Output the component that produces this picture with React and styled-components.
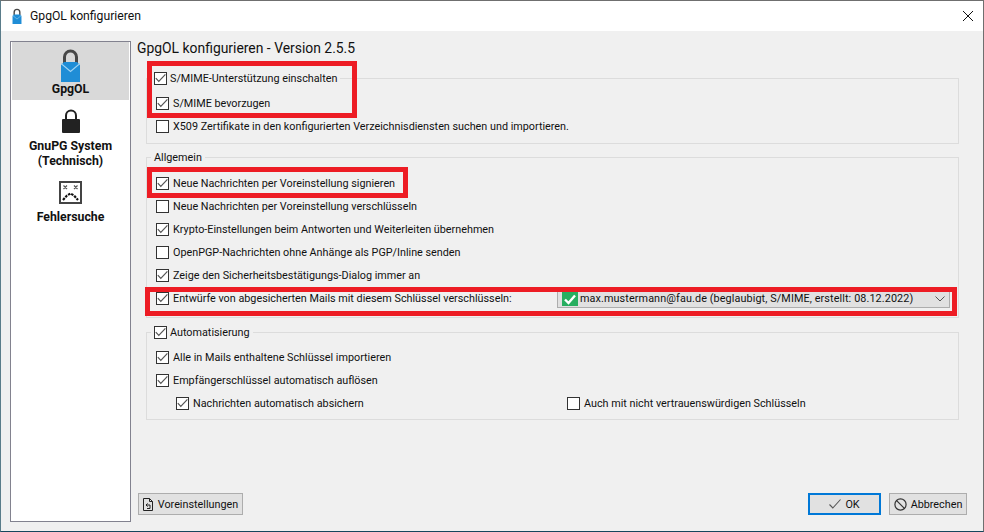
import React from 'react';
import styled, { createGlobalStyle } from 'styled-components';

const GlobalStyle = createGlobalStyle`
  html, body { margin: 0; padding: 0; background: #0c4a63; }
  * { box-sizing: border-box; }
  #root { width: 984px; height: 532px; }
  svg { flex: none; }
`;

const Window = styled.div`
  position: relative;
  width: 984px;
  height: 532px;
  display: flex;
  flex-direction: column;
  background: #f0f0f0;
  border: 1px solid #6f6f6f;
  border-left-color: #5a7c8a;
  border-bottom-color: #16465c;
  font-family: Roboto, "Liberation Sans", sans-serif;
  font-size: 10.8px;
  color: #111;
  white-space: nowrap;
  overflow: hidden;
`;

const TitleBar = styled.div`
  height: 30px;
  flex: none;
  display: flex;
  align-items: center;
  padding: 0 10px 0 11px;
  gap: 8px;
  background: #fff;
  font-size: 12.2px;
`;

const TitleText = styled.span`
  flex: 1;
`;

const Body = styled.div`
  flex: 1;
  display: flex;
  padding: 10px 9px 9px 9px;
  gap: 6px;
  min-height: 0;
`;

const Sidebar = styled.div`
  width: 121px;
  flex: none;
  background: #fff;
  border: 1px solid #82828f;
  padding: 0 1px;
  display: flex;
  flex-direction: column;
`;

const SideItem = styled.div`
  display: flex;
  flex-direction: column;
  align-items: center;
  text-align: center;
  height: ${p => p.$h}px;
  padding-top: ${p => p.$top}px;
  background: ${p => (p.$active ? '#d9d9d9' : 'transparent')};
  font-weight: 700;
  font-size: 12.3px;
  line-height: 15px;
`;

const SideLabel = styled.div`
  margin-top: ${p => p.$gap}px;
`;

const Main = styled.div`
  flex: 1;
  min-width: 0;
  display: flex;
  flex-direction: column;
`;

const Heading = styled.div`
  font-size: 13.9px;
  line-height: 15px;
  height: 30px;
  flex: none;
`;

const Group = styled.fieldset`
  margin: ${p => p.$mt}px 0 0 9px;
  width: 813px;
  height: ${p => p.$h}px;
  flex: none;
  border: 1px solid #dcdcdc;
  padding: 0;
  min-width: 0;
`;

const GroupTitle = styled.legend`
  margin-left: 4px;
  padding: 0 3px;
  height: 15px;
  display: flex;
  align-items: center;
  gap: 3px;
  line-height: 15px;
`;

const Rows = styled.div`
  display: flex;
  flex-direction: column;
  padding: ${p => p.$top}px 8px 0 9px;
`;

const Row = styled.div`
  height: 23px;
  display: flex;
  align-items: center;
  gap: 4px;
  padding-left: ${p => p.$indent || 0}px;
`;

const SubOption = styled.div`
  display: flex;
  align-items: center;
  gap: 4px;
  width: ${p => p.$w}px;
`;

const BoxFrame = styled.span`
  width: 13px;
  height: 13px;
  flex: none;
  border: 1px solid #333;
  background: #fff;
  display: inline-flex;
  align-items: center;
  justify-content: center;
`;

const Combo = styled.div`
  margin-left: 45px;
  width: 393px;
  height: 19px;
  flex: none;
  display: flex;
  align-items: center;
  gap: 2px;
  padding: 0 4px 0 4px;
  background: #e1e1e1;
  border: 1px solid #adadad;
`;

const ComboText = styled.span`
  flex: 1;
  letter-spacing: 0.11px;
`;

const Footer = styled.div`
  margin-top: auto;
  padding: 0 7px 7px 1px;
  display: flex;
  align-items: center;
  gap: 8px;
`;

const Button = styled.div`
  height: 22px;
  display: flex;
  align-items: center;
  justify-content: center;
  gap: ${p => p.$gap || 4}px;
  width: ${p => p.$w}px;
  background: #e1e1e1;
  border: ${p => (p.$def ? '2px solid #0078d7' : '1px solid #adadad')};
`;

const Spacer = styled.div`
  flex: 1;
`;

const Mark = styled.div`
  position: absolute;
  left: ${p => p.$x - 1}px;
  top: ${p => p.$y - 1}px;
  width: ${p => p.$w}px;
  height: ${p => p.$h}px;
  border: 5px solid #ed1c24;
  pointer-events: none;
`;

const Check = () => (
  <svg width="11" height="11" viewBox="0 0 11 11">
    <path d="M.8 5.2 L3.8 8.4 L10.4 1.4" fill="none" stroke="#555" strokeWidth="1.2" />
  </svg>
);

const CheckBox = ({ on }) => <BoxFrame>{on && <Check />}</BoxFrame>;

const CheckRow = ({ on, indent, children }) => (
  <Row $indent={indent}>
    <CheckBox on={on} />
    <span>{children}</span>
  </Row>
);

const MailLock = ({ w = 19, h = 34 }) => (
  <svg width={w} height={h} viewBox="0 0 19 34">
    <path d="M3.5 15 V9 a6 6 0 0 1 12 0 V15" fill="none" stroke="#484848" strokeWidth="3" />
    <path d="M0 17 L3 14 H16 L19 17 V34 H0 Z" fill="#1f8dd6" />
    <path d="M0 15.5 L9.5 23.5 L19 15.5" fill="none" stroke="#9fd3f3" strokeWidth="1.2" />
  </svg>
);

const BlackLock = () => (
  <svg width="18" height="24" viewBox="0 0 18 24">
    <path d="M4 11 V6.5 a5 5 0 0 1 10 0 V11" fill="none" stroke="#222" strokeWidth="2" />
    <rect x="0" y="10" width="18" height="14" rx="1" fill="#222" />
  </svg>
);

const SadScreen = () => (
  <svg width="23" height="23" viewBox="0 0 23 23">
    <rect x="1" y="1" width="21" height="21" fill="#fff" stroke="#444" strokeWidth="2" />
    <path d="M4.5 4.5 L8 8 M8 4.5 L4.5 8 M15 4.5 L18.5 8 M18.5 4.5 L15 8" stroke="#555" strokeWidth="1.2" />
    <path d="M4 19 L8 14.5 L11.5 12.5 L15 14.5 L19 19" fill="none" stroke="#111" strokeWidth="2.2" strokeDasharray="2.6 1" />
  </svg>
);

const DocIcon = () => (
  <svg width="10" height="13" viewBox="0 0 10 13">
    <path d="M.5 .5 H6.5 L9.5 3.5 V12.5 H.5 Z M6.5 .5 V3.5 H9.5" fill="none" stroke="#222" />
    <path d="M3 7 H7 V10.5 H4 M4.6 5.4 L3 7 L4.6 8.6" fill="none" stroke="#222" />
  </svg>
);

const CancelIcon = () => (
  <svg width="13" height="13" viewBox="0 0 13 13">
    <circle cx="6.5" cy="6.5" r="5.6" fill="none" stroke="#333" strokeWidth="1.2" />
    <path d="M2.6 2.6 L10.4 10.4" stroke="#333" strokeWidth="1.2" />
  </svg>
);

const OkIcon = () => (
  <svg width="12" height="10" viewBox="0 0 12 10">
    <path d="M.5 5.5 L3.8 9 L11.5 .5" fill="none" stroke="#555" strokeWidth="1.1" />
  </svg>
);

const CloseIcon = () => (
  <svg width="10" height="10" viewBox="0 0 10 10">
    <path d="M0 0 L10 10 M10 0 L0 10" stroke="#111" />
  </svg>
);

const GreenTick = () => (
  <svg width="16" height="14" viewBox="0 0 16 14">
    <rect width="16" height="14" fill="#27ae60" />
    <path d="M3 7.5 L6.5 11 L13 3.5" fill="none" stroke="#fff" strokeWidth="2.4" />
  </svg>
);

const Chevron = () => (
  <svg width="10" height="6" viewBox="0 0 10 6">
    <path d="M.5 .5 L5 5 L9.5 .5" fill="none" stroke="#555" />
  </svg>
);

const App = () => (
  <>
    <GlobalStyle />
    <Window>
      <TitleBar>
        <MailLock w={10} h={16} />
        <TitleText>GpgOL konfigurieren</TitleText>
        <CloseIcon />
      </TitleBar>
      <Body>
        <Sidebar>
          <SideItem $active $h={58} $top={6}>
            <MailLock />
            <SideLabel $gap={0}>GpgOL</SideLabel>
          </SideItem>
          <SideItem $h={73} $top={9}>
            <BlackLock />
            <SideLabel $gap={6}>GnuPG System<br />(Technisch)</SideLabel>
          </SideItem>
          <SideItem $h={60} $top={8}>
            <SadScreen />
            <SideLabel $gap={6}>Fehlersuche</SideLabel>
          </SideItem>
        </Sidebar>
        <Main>
          <Heading>GpgOL konfigurieren - Version 2.5.5</Heading>
          <Group $h={73} $mt={0}>
            <GroupTitle><CheckBox on />S/MIME-Unterstützung einschalten</GroupTitle>
            <Rows $top={6}>
              <CheckRow on>S/MIME bevorzugen</CheckRow>
              <CheckRow>X509 Zertifikate in den konfigurierten Verzeichnisdiensten suchen und importieren.</CheckRow>
            </Rows>
          </Group>
          <Group $h={168} $mt={6}>
            <GroupTitle>Allgemein</GroupTitle>
            <Rows $top={7}>
              <CheckRow on>Neue Nachrichten per Voreinstellung signieren</CheckRow>
              <CheckRow>Neue Nachrichten per Voreinstellung verschlüsseln</CheckRow>
              <CheckRow on>Krypto-Einstellungen beim Antworten und Weiterleiten übernehmen</CheckRow>
              <CheckRow>OpenPGP-Nachrichten ohne Anhänge als PGP/Inline senden</CheckRow>
              <CheckRow on>Zeige den Sicherheitsbestätigungs-Dialog immer an</CheckRow>
              <Row>
                <CheckBox on />
                <SubOption $w={335}>Entwürfe von abgesicherten Mails mit diesem Schlüssel verschlüsseln:</SubOption>
                <Combo>
                  <GreenTick />
                  <ComboText>max.mustermann@fau.de (beglaubigt, S/MIME, erstellt: 08.12.2022)</ComboText>
                  <Chevron />
                </Combo>
              </Row>
            </Rows>
          </Group>
          <Group $h={95} $mt={7}>
            <GroupTitle><CheckBox on />Automatisierung</GroupTitle>
            <Rows $top={6}>
              <CheckRow on>Alle in Mails enthaltene Schlüssel importieren</CheckRow>
              <CheckRow on>Empfängerschlüssel automatisch auflösen</CheckRow>
              <Row $indent={20}>
                <SubOption $w={387}>
                  <CheckBox on />
                  <span>Nachrichten automatisch absichern</span>
                </SubOption>
                <SubOption>
                  <CheckBox />
                  <span>Auch mit nicht vertrauenswürdigen Schlüsseln</span>
                </SubOption>
              </Row>
            </Rows>
          </Group>
          <Footer>
            <Button $w={105} $gap={5}><DocIcon />Voreinstellungen</Button>
            <Spacer />
            <Button $def $w={73}><OkIcon />OK</Button>
            <Button $w={78}><CancelIcon />Abbrechen</Button>
          </Footer>
        </Main>
      </Body>
      <Mark $x={147} $y={61} $w={210} $h={57} />
      <Mark $x={147} $y={167} $w={261} $h={31} />
      <Mark $x={145} $y={287} $w={812} $h={29} />
    </Window>
  </>
);

export default App;
